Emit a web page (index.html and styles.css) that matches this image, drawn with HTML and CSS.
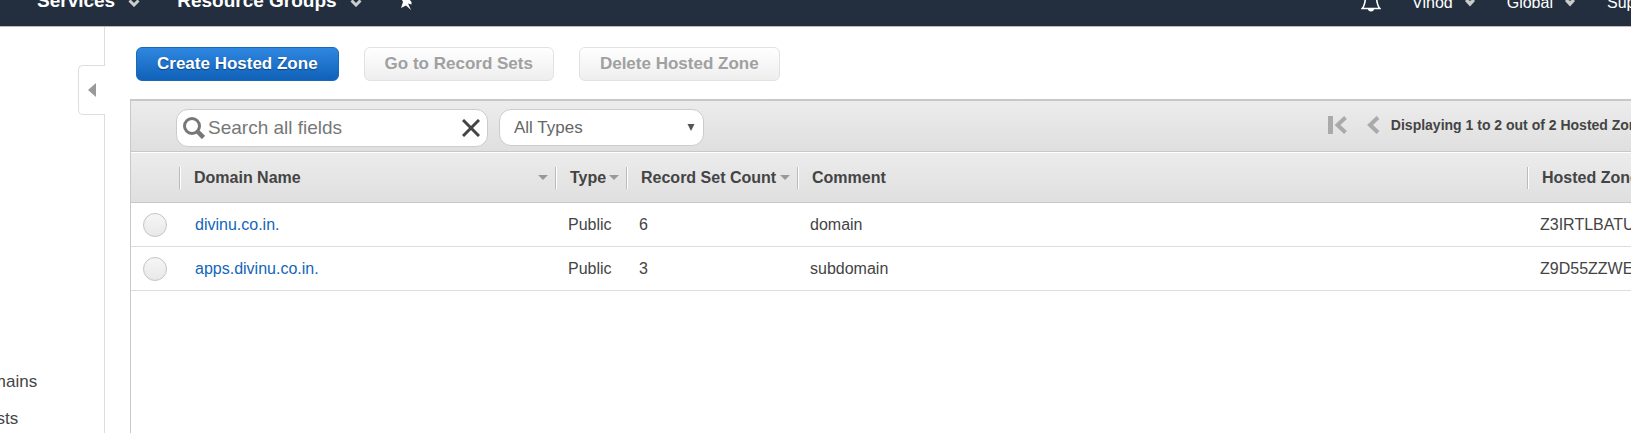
FILE: index.html
```html
<!DOCTYPE html>
<html lang="en">
<head>
<meta charset="utf-8">
<title>Hosted Zones</title>
<link rel="stylesheet" href="styles.css">
</head>
<body>
<div class="page">
  <header class="topbar">
    <nav class="topnav">
      <button class="menu menu-main" type="button">Services
        <svg class="chevron" viewBox="0 0 12 8" width="12" height="8"><path d="M1.500 1.500 6 6l4.500-4.500"/></svg></button>
      <button class="menu menu-main" type="button">Resource Groups
        <svg class="chevron" viewBox="0 0 12 8" width="12" height="8"><path d="M1.500 1.500 6 6l4.500-4.500"/></svg></button>
      <button class="menu" type="button" aria-label="Pin shortcuts">
        <svg viewBox="0 0 14 20" width="14" height="20"><path fill="#fff" d="M4 1h7l-1 7 2.500 3v2.500L9 12.500l3 6.500-5-4.500L2 17l2-6-1-2z"/></svg></button>
      <div class="account">
        <button class="menu bell" type="button" aria-label="Notifications">
          <svg viewBox="0 0 20 24" width="20" height="24"><path fill="none" stroke="#fff" stroke-width="1.600" d="M10 2c-4 0-5 3-5.500 7C4 14 3.500 17 1.200 19.500h17.600C16.500 17 16 14 15.500 9 15 5 14 2 10 2z"/><path fill="#fff" d="M7 20h6c0 1.500-1 2.500-3 2.500S7 21.500 7 20z"/></svg></button>
        <button class="menu" type="button">Vinod
          <svg class="caret" viewBox="0 0 12 10" width="12" height="10"><path d="M1 2 3 0l3 2 3-2 2 2-5 5.500z"/></svg></button>
        <button class="menu" type="button">Global
          <svg class="caret" viewBox="0 0 12 10" width="12" height="10"><path d="M1 2 3 0l3 2 3-2 2 2-5 5.500z"/></svg></button>
        <button class="menu" type="button">Support</button>
      </div>
    </nav>
  </header>

  <div class="layout">
    <aside class="sidebar">
      <button class="collapse" type="button" aria-label="Collapse navigation">
        <svg viewBox="0 0 8 14" width="8" height="14"><path fill="#999" d="M8 0v14L0 7z"/></svg></button>
      <ul class="sidelinks">
        <li><a href="#">Registered domains</a></li>
        <li><a href="#">Pending requests</a></li>
      </ul>
    </aside>

    <main class="content">
      <div class="actions">
        <button class="btn btn-primary" type="button">Create Hosted Zone</button>
        <button class="btn" type="button" disabled>Go to Record Sets</button>
        <button class="btn" type="button" disabled>Delete Hosted Zone</button>
      </div>

      <section class="panel">
        <div class="toolbar">
          <div class="search">
            <svg viewBox="0 0 22 22" width="22" height="22"><circle cx="9" cy="9" r="7.500" fill="none" stroke="#777" stroke-width="3"/><path stroke="#777" stroke-width="4.500" d="m14 14 6.500 6.500"/></svg>
            <input type="text" placeholder="Search all fields" aria-label="Search all fields">
            <button class="clear" type="button" aria-label="Clear search">
              <svg viewBox="0 0 18 18" width="18" height="18"><path stroke="#444" stroke-width="3" d="m1 1 16 16M17 1 1 17"/></svg></button>
          </div>
          <div class="picker">
            <select aria-label="Zone type"><option>All Types</option></select>
            <svg viewBox="0 0 8 8" width="8" height="8"><path fill="#555" d="M.5 0h7L4 7z"/></svg>
          </div>
          <div class="pager">
            <button type="button" aria-label="First page">
              <svg viewBox="0 0 19 18" width="19" height="18"><path fill="#aaa" d="M0 0h5v18H0z"/><path fill="none" stroke="#aaa" stroke-width="4" d="M17.500 1.500 9.500 9l8 7.500"/></svg></button>
            <button type="button" aria-label="Previous page">
              <svg viewBox="0 0 13 18" width="13" height="18"><path fill="none" stroke="#aaa" stroke-width="4" d="M11 1.500 3 9l8 7.500"/></svg></button>
            <span>Displaying 1 to 2 out of 2 Hosted Zones</span>
          </div>
        </div>

        <table class="zones">
          <colgroup><col class="c-pick"><col class="c-name"><col class="c-type"><col class="c-count"><col><col class="c-id"></colgroup>
          <thead>
            <tr>
              <td></td>
              <th><div class="head">Domain Name<i class="sort"></i></div></th>
              <th><div class="head">Type<i class="sort"></i></div></th>
              <th><div class="head">Record Set Count<i class="sort"></i></div></th>
              <th><div class="head">Comment</div></th>
              <th><div class="head">Hosted Zone ID</div></th>
            </tr>
          </thead>
          <tbody>
            <tr>
              <td class="pick"><input type="radio" name="zone" aria-label="divinu.co.in."></td>
              <td class="name"><a href="#">divinu.co.in.</a></td><td>Public</td><td>6</td><td>domain</td><td>Z3IRTLBATU</td>
            </tr>
            <tr>
              <td class="pick"><input type="radio" name="zone" aria-label="apps.divinu.co.in."></td>
              <td class="name"><a href="#">apps.divinu.co.in.</a></td><td>Public</td><td>3</td><td>subdomain</td><td>Z9D55ZZWE</td>
            </tr>
          </tbody>
        </table>
      </section>
    </main>
  </div>
</div>
</body>
</html>
```

FILE: styles.css
```css
* { box-sizing: border-box; }

html, body { height: 100%; }

body {
  margin: 0;
  overflow: hidden;
  background: #fff;
  color: #444;
  font: 16px/20px "Liberation Sans", Arial, sans-serif;
}

button, input, select { font: inherit; color: inherit; }
button { margin: 0; padding: 0; border: 0; background: none; }
a { text-decoration: none; color: inherit; }
svg { display: block; flex: none; }

/* The console is wider than the window and runs off its right edge. */
.page {
  display: flex;
  flex-direction: column;
  width: calc(100% + 120px);
  min-height: 100%;
}

/* Top bar, scrolled half out of view */
.topbar {
  display: flex;
  align-items: flex-end;
  height: 27px;
  overflow: hidden;
  background: #232f3e;
  border-bottom: 1px solid #bbb;
}
.topnav {
  display: flex;
  flex: 1;
  align-items: center;
  gap: 37px;
  height: 50px;
  padding: 0 67px 0 37px;
  color: #fff;
}
.menu {
  display: flex;
  align-items: center;
  gap: 13px;
  white-space: nowrap;
}
.menu-main { font-size: 19px; font-weight: bold; }
.chevron { margin-top: 3px; fill: none; stroke: #ccc; stroke-width: 3; }
.caret { margin-top: 2px; fill: #ccc; }
.account {
  display: flex;
  align-items: center;
  gap: 31px;
  margin-left: auto;
  padding: 4px 21px 0 0;
}
.account .menu { gap: 11px; }
.account .bell { padding-bottom: 4px; }

.layout { display: flex; flex: 1; }

/* Sidebar */
.sidebar {
  position: relative;
  flex: none;
  width: 105px;
  padding-top: 337px;
  border-right: 1px solid #ddd;
}
.collapse {
  position: absolute;
  top: 38px;
  right: -1px;
  display: flex;
  align-items: center;
  width: 27px;
  height: 50px;
  padding-left: 9px;
  border: 1px solid #ddd;
  border-right: 0;
  border-radius: 5px 0 0 5px;
  background: #fff;
}
.sidelinks {
  display: grid;
  gap: 17px;
  margin: 0 0 0 -114px;
  padding: 8px 0 0;
  list-style: none;
  font-size: 17px;
  white-space: nowrap;
}

/* Main column */
.content {
  display: flex;
  flex: 1;
  flex-direction: column;
  min-width: 0;
  padding-left: 25px;
}
.actions {
  display: flex;
  gap: 25px;
  padding: 20px 6px 18px;
}
.btn {
  height: 34px;
  padding: 0 20px;
  border: 1px solid #e2e2e2;
  border-radius: 6px;
  background: linear-gradient(#fff, #eee);
  color: #a0a0a0;
  font-size: 17px;
  font-weight: bold;
}
.btn-primary {
  border-color: #1a68b8;
  background: linear-gradient(#2f87e0, #1061b8);
  color: #fff;
  text-shadow: 0 1px 1px #0a4480;
}

.panel {
  flex: 1;
  border-top: 2px solid #c8c8c8;
  border-left: 1px solid #c8c8c8;
}
.toolbar {
  display: flex;
  align-items: flex-start;
  gap: 11px;
  height: 51px;
  padding: 8px 98px 0 45px;
  border-bottom: 1px solid #c8c8c8;
  background: linear-gradient(#ececec, #dfdfdf);
}
.search {
  display: flex;
  align-items: center;
  gap: 3px;
  width: 312px;
  height: 38px;
  padding: 0 7px 0 6px;
  border: 1px solid #ccc;
  border-radius: 12px;
  background: #fff;
}
.search input {
  flex: 1;
  min-width: 0;
  padding: 0;
  border: 0;
  outline: 0;
  background: none;
  font-size: 19px;
}
.search input::placeholder { color: #777; opacity: 1; }

.picker { display: grid; align-items: center; }
.picker > * { grid-area: 1 / 1; }
.picker select {
  appearance: none;
  width: 205px;
  height: 37px;
  padding: 0 14px;
  border: 1px solid #ccc;
  border-radius: 12px;
  background: #fff;
  color: #666;
  font-size: 17px;
}
.picker svg { justify-self: end; margin-right: 9px; pointer-events: none; }

.pager {
  display: flex;
  align-items: center;
  gap: 20px;
  height: 32px;
  margin-left: auto;
  font-size: 14px;
  font-weight: bold;
  white-space: nowrap;
}
.pager span { margin-left: -9px; }

/* Zone table */
.zones {
  width: 100%;
  table-layout: fixed;
  border-collapse: separate;
  border-spacing: 0;
  white-space: nowrap;
}
.c-pick { width: 48px; }
.c-name { width: 376px; }
.c-type { width: 71px; }
.c-count { width: 171px; }
.c-id { width: 224px; }

.zones thead tr { background: linear-gradient(#ececec, #dfdfdf); }
.zones th, .zones thead td {
  height: 51px;
  padding: 0;
  border-top: 1px solid #fff;
  border-bottom: 1px solid #c8c8c8;
}
.head {
  display: flex;
  align-items: center;
  justify-content: space-between;
  height: 22px;
  padding: 0 7px 0 14px;
  border-left: 1px solid #bbb;
  box-shadow: inset 1px 0 #fff;
}
.sort {
  border: 5px solid transparent;
  border-top-color: #999;
  border-bottom: 0;
}
.zones tbody td {
  height: 44px;
  padding: 0 0 0 13px;
  border-bottom: 1px solid #ddd;
}
.zones tbody .pick { padding-left: 12px; }
.zones tbody .name { padding-left: 16px; }
.zones a { color: #1166bb; }
.pick input {
  display: block;
  appearance: none;
  width: 24px;
  height: 24px;
  margin: 0;
  border: 1px solid #c4c4c4;
  border-radius: 50%;
  background: linear-gradient(#f6f6f6, #e8e8e8);
}
```
